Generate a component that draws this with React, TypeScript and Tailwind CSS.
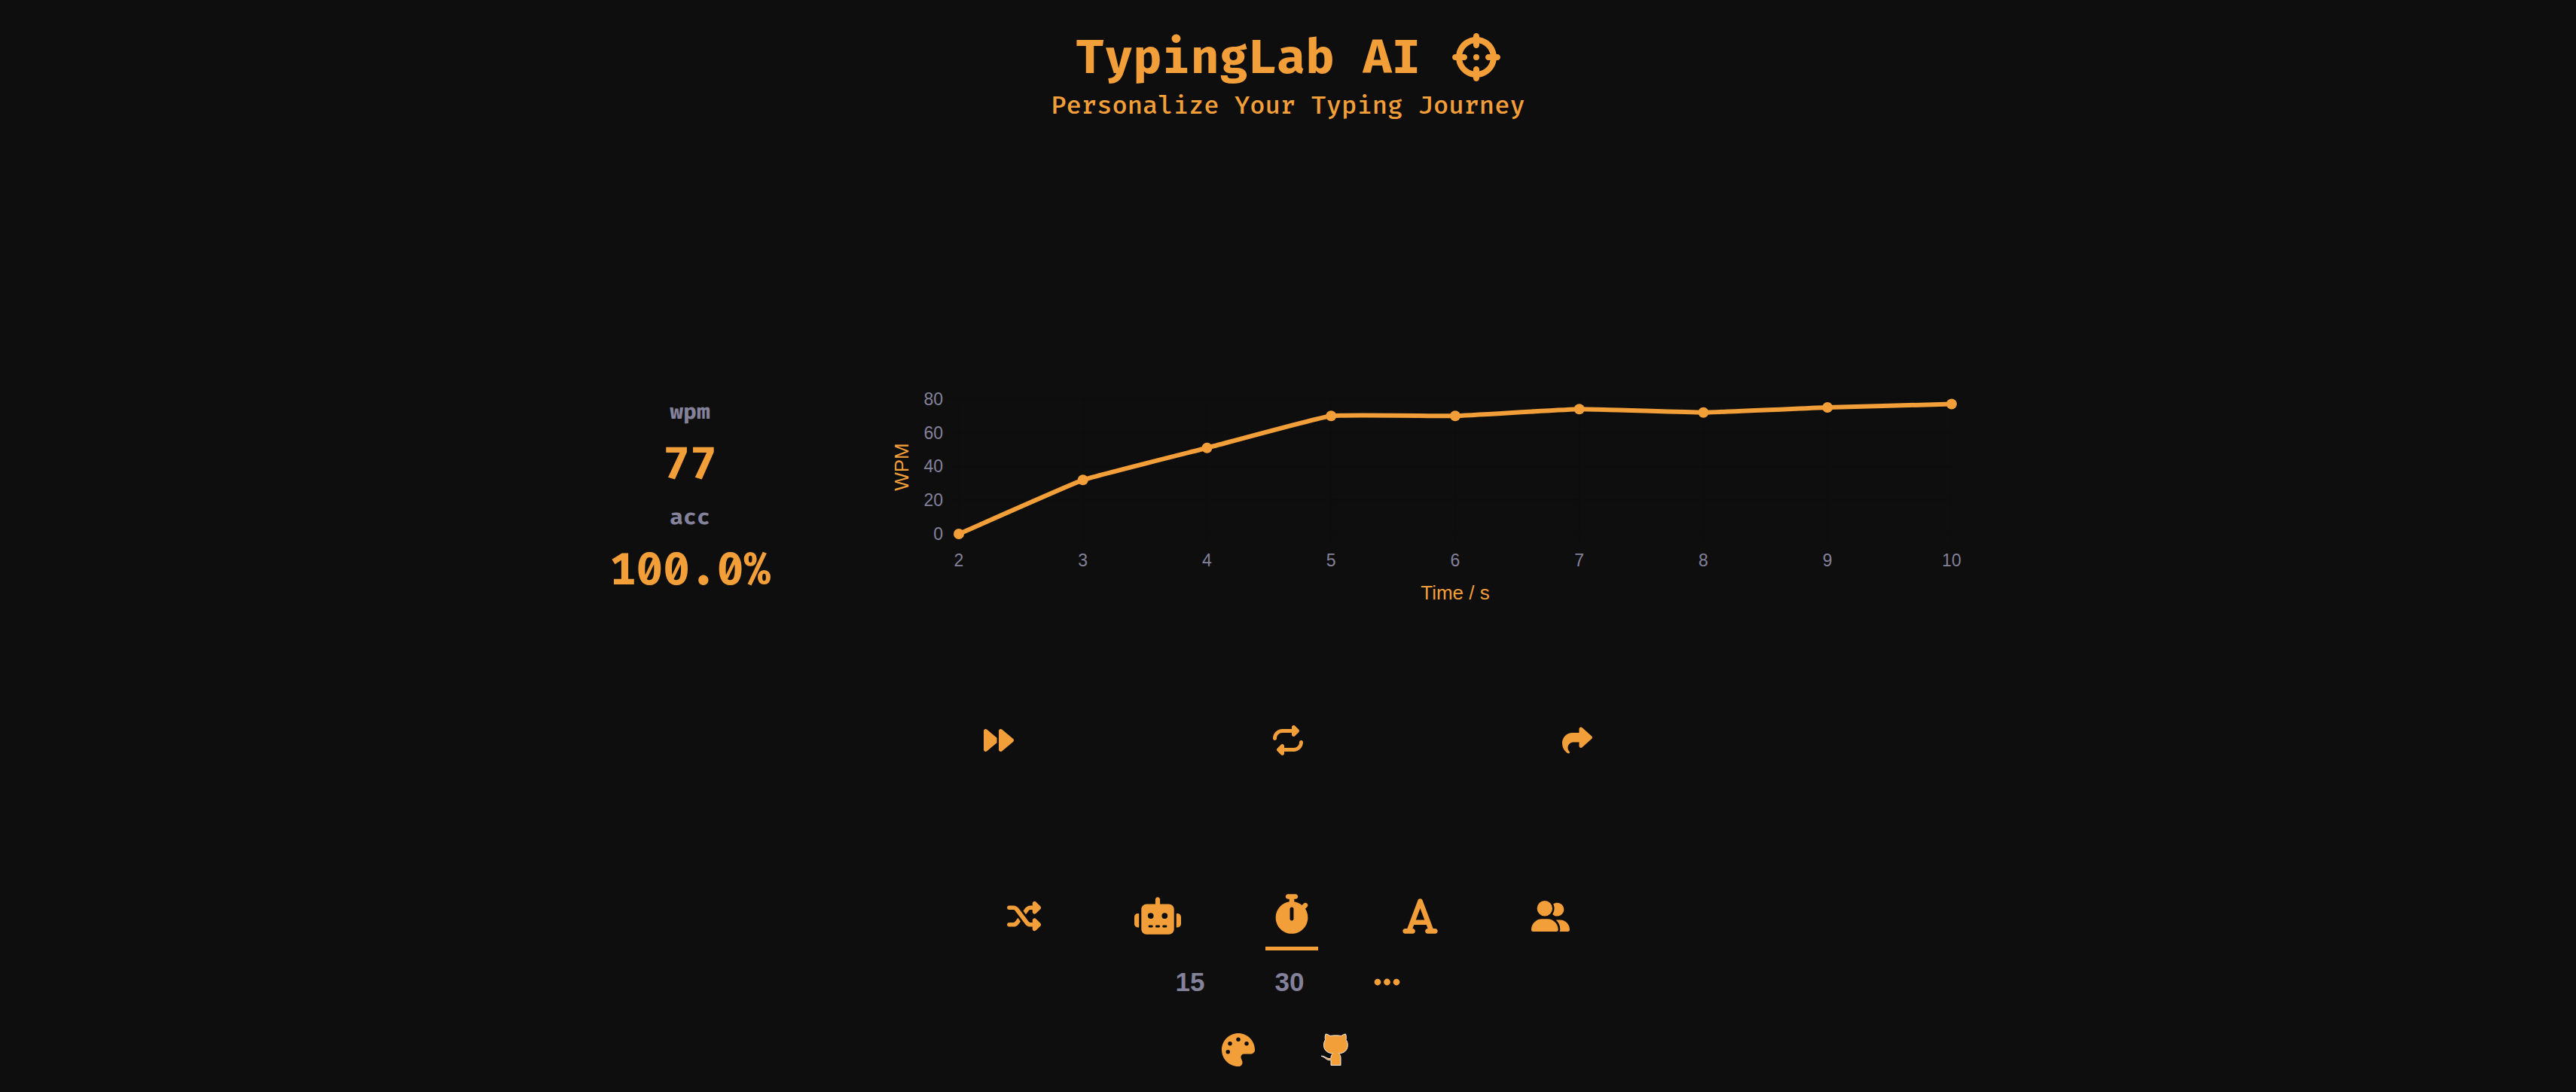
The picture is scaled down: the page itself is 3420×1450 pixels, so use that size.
import React from "react";
import { FaPalette, FaRobot, FaFont, FaStopwatch, FaShuffle, FaUserGroup, FaCrosshairs, FaEllipsis, FaForward, FaRepeat, FaShare } from "react-icons/fa6";

const wpm = [0, 32, 51, 70, 70, 74, 72, 75, 77];
const X0 = 125;
const STEP = 1318 / 8;
const Y0 = 192;
const px = (i: number) => X0 + i * STEP;
const py = (v: number) => Y0 - v * 2.24;

function linePath(values: number[]) {
  const pts = values.map((v, i) => ({ x: px(i), y: py(v) }));
  const t = 0.1;
  const ctrl = pts.map((p, i) => {
    const a = pts[Math.max(i - 1, 0)];
    const b = pts[Math.min(i + 1, pts.length - 1)];
    const d1 = Math.hypot(p.x - a.x, p.y - a.y);
    const d2 = Math.hypot(b.x - p.x, b.y - p.y);
    const s = d1 + d2;
    return {
      inX: p.x - (t * d1 * (b.x - a.x)) / s,
      inY: p.y - (t * d1 * (b.y - a.y)) / s,
      outX: p.x + (t * d2 * (b.x - a.x)) / s,
      outY: p.y + (t * d2 * (b.y - a.y)) / s,
    };
  });
  return pts
    .map((p, i) =>
      i === 0
        ? `M${p.x} ${p.y}`
        : `C${ctrl[i - 1].outX} ${ctrl[i - 1].outY} ${ctrl[i].inX} ${ctrl[i].inY} ${p.x} ${p.y}`
    )
    .join(" ");
}

function WpmChart() {
  return (
    <svg
      viewBox="0 0 1588 300"
      role="img"
      aria-label="WPM over time"
      className="block w-full font-['Liberation_Sans',sans-serif]"
    >
      <g stroke="#0d0d0d" strokeWidth="2">
        {wpm.map((_, i) => (
          <line key={i} x1={px(i)} x2={px(i)} y1={py(80)} y2={Y0 + 14} />
        ))}
        {[0, 20, 40, 60, 80].map((v) => (
          <line key={v} x1={X0 - 14} x2={px(8)} y1={py(v)} y2={py(v)} />
        ))}
      </g>
      <g className="fill-[#84819a] text-[23px]">
        {[0, 20, 40, 60, 80].map((v) => (
          <text key={v} x={X0 - 21} y={py(v) + 8} textAnchor="end">
            {v}
          </text>
        ))}
        {wpm.map((_, i) => (
          <text key={i} x={px(i)} y={235} textAnchor="middle">
            {i + 2}
          </text>
        ))}
      </g>
      <g className="fill-[#f39f39] text-[26px]">
        <text x={px(4)} y={279} textAnchor="middle">
          Time / s
        </text>
        <text transform="translate(58 103) rotate(-90)" textAnchor="middle">
          WPM
        </text>
      </g>
      <path d={linePath(wpm)} fill="none" stroke="#f39f39" strokeWidth="6" />
      {wpm.map((v, i) => (
        <circle key={i} cx={px(i)} cy={py(v)} r="7" fill="#f39f39" />
      ))}
    </svg>
  );
}

function OctocatIcon() {
  return (
    <svg viewBox="0 0 44 44" className="size-11" fill="currentColor" aria-hidden="true">
      <path
        d="M6 1 C8.500 1.200 10.500 2.500 12 3.500 C17 2.600 22 2.600 26.500 3.500 C28.500 2.200 30.500 1.200 32.500 1 C33.600 4 33.500 6.500 33 8.500 C35.300 11.500 36 16 34.500 20 C33 24.200 29 26.500 23.500 27 C25.500 28.500 26 30.500 26 33 V42.500 H13 V35.500 C8.500 36.500 6 33.500 4 32 C2.500 31 1 30.500 -1 30 C4 29.800 6 32.500 9 33.300 C11 33.800 13 33.800 13 32.500 C13 30.500 13.500 28.500 15.500 27 C10 26.500 6 24.200 4.200 20 C2.800 16 3.500 11.500 5.500 8.500 C5 6.500 5 4 6 1Z"
        stroke="#f4efe8"
        strokeWidth="1"
      />
      <path d="M14 32 V42 H25 V32 C25 30 24 28 22 26 H17 C15 28 14 30 14 32Z" />
    </svg>
  );
}

function Stat({ label, value }: { label: string; value: string }) {
  return (
    <div>
      <dt className="h-11 text-[29px] leading-[42px] text-[#84819a]">{label}</dt>
      <dd className="h-24 text-[58px] leading-24">{value}</dd>
    </div>
  );
}

const modes = [
  { label: "Random words", icon: <FaShuffle className="size-[45px]" /> },
  { label: "AI text", icon: <FaRobot className="h-[50px] w-[62px]" /> },
  { label: "Timed", icon: <FaStopwatch className="h-[53px] w-[46px]" />, active: true },
  { label: "Letters", icon: <FaFont className="h-[53px] w-[47px]" /> },
  { label: "Multiplayer", icon: <FaUserGroup className="h-[41px] w-[51px]" /> },
];

export default function App() {
  return (
    <div className="flex min-h-screen flex-col items-center bg-[#0e0e0e] font-['Fira_Code','DejaVu_Sans_Mono',monospace] text-[#f39f39]">
      <header className="flex flex-col items-center pt-[35px]">
        <h1 className="flex items-center gap-[42px] text-[62px] leading-[86px] font-bold">
          TypingLab AI
          <FaCrosshairs className="mb-1 size-16" />
        </h1>
        <p className="text-[33px] leading-10 font-medium">Personalize Your Typing Journey</p>
      </header>

      <main className="flex w-full flex-col items-center">
        <section className="mt-[356px] grid w-3/5 grid-cols-[464px_1fr]">
          <dl className="pt-[9px] text-center font-bold">
            <Stat label="wpm" value="77" />
            <Stat label="acc" value="100.0%" />
          </dl>
          <WpmChart />
        </section>

        <div className="mt-[146px] flex gap-[340px]">
          <button aria-label="Next" className="flex w-11 justify-center">
            <FaForward className="size-10" />
          </button>
          <button aria-label="Repeat" className="flex w-11 justify-center">
            <FaRepeat className="size-10" />
          </button>
          <button aria-label="Share" className="flex w-11 justify-center">
            <FaShare className="size-10" />
          </button>
        </div>
      </main>

      <nav className="mt-[167px] flex items-center gap-[100px]">
        {modes.map((m) => (
          <button
            key={m.label}
            aria-label={m.label}
            className={m.active ? "border-b-5 border-[#f39f39] px-3 py-[17px]" : "px-3"}
          >
            {m.icon}
          </button>
        ))}
      </nav>

      <div className="mt-[22px] flex items-center gap-[93px] font-['Liberation_Sans',sans-serif] text-[35px] leading-10 font-bold text-[#84819a]">
        <button>15</button>
        <button>30</button>
        <button aria-label="More durations" className="text-[#f39f39]">
          <FaEllipsis className="h-10 w-[35px]" />
        </button>
      </div>

      <footer className="mt-12 flex gap-[88px]">
        <button aria-label="Theme">
          <FaPalette className="size-11" />
        </button>
        <a href="#github" aria-label="GitHub">
          <OctocatIcon />
        </a>
      </footer>
    </div>
  );
}
